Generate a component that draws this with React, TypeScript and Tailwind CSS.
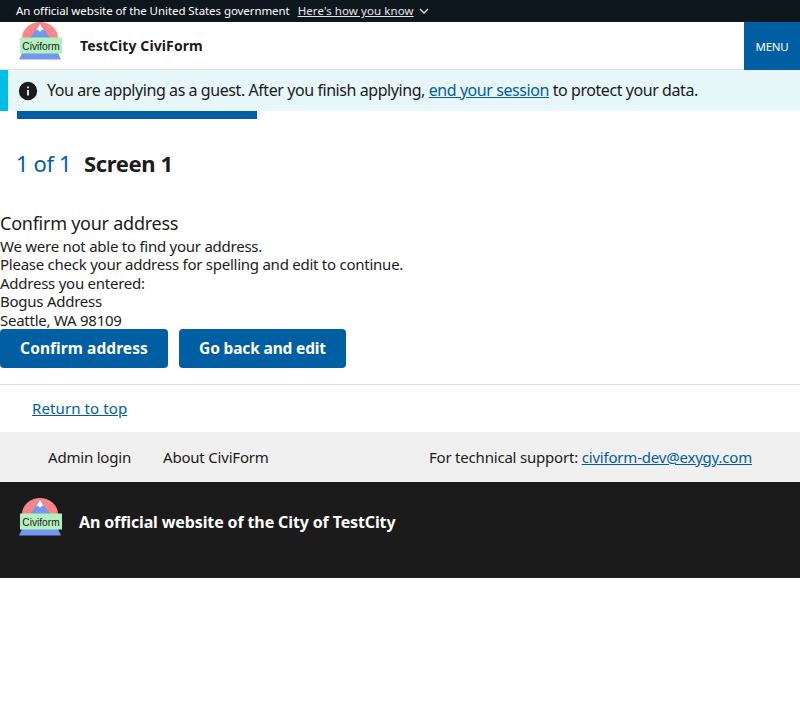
import React from 'react';

const Logo: React.FC = () => (
  <svg width="44" height="38" viewBox="0 0 44 38" className="shrink-0">
    <path d="M3 16a18 16 0 0 1 36 0z" fill="#fb8484" />
    <circle cx="9" cy="10" r="0.6" fill="#ffd9d9" />
    <circle cx="14" cy="6" r="0.6" fill="#ffd9d9" />
    <circle cx="30" cy="5" r="0.6" fill="#ffd9d9" />
    <circle cx="34" cy="11" r="0.6" fill="#ffd9d9" />
    <path d="M21 1.5L31 16H11z" fill="#7497ee" />
    <path d="M21 2l4 6.5-2-1-2 2.5-2-2.5-2 1z" fill="#ffffff" />
    <path d="M3 31h36l3 6.5H0z" fill="#7497ee" />
    <rect x="1" y="15.5" width="42" height="16" fill="#b3f0bd" />
    <text x="22" y="27.5" textAnchor="middle" fontSize="10.2" fill="#1b1b1b" fontFamily="'Liberation Sans', sans-serif">
      Civiform
    </text>
  </svg>
);

export default function App() {
  return (
    <div className="min-h-[720px] bg-white font-['Noto_Sans',sans-serif] text-[#1b1b1b]">
      <div className="flex h-[22px] items-center bg-[#0f171e] pl-4 text-[11.5px] text-white">
        <span className="tracking-[-0.07px]">An official website of the United States government</span>
        <a href="#" className="ml-2 tracking-[0.08px] text-[#e6e6e6] underline">Here's how you know</a>
        <svg width="12" height="12" viewBox="0 0 12 12" fill="none" stroke="#d9d9d9" strokeWidth="1.4" className="ml-1">
          <path d="M2 4l4 4 4-4" />
        </svg>
      </div>

      <header className="flex h-[48px] items-stretch justify-between">
        <div className="flex grow items-start border-b border-[#dfe1e2] pl-[19px]">
          <Logo />
          <span className="ml-[17px] mt-[13px] text-[14px] font-bold tracking-[0.1px]">TestCity CiviForm</span>
        </div>
        <button className="w-14 bg-[#005ea2] pt-[2px] text-[11.5px] tracking-[-0.2px] text-white">MENU</button>
      </header>

      <div className="flex h-[41px] items-center border-l-8 border-[#00bde3] bg-[#e7f6f8] pl-[9px] text-[16px] tracking-[-0.43px]">
        <svg width="22" height="22" viewBox="0 0 24 24" className="shrink-0" fill="#1b1b1b">
          <path d="M12 2a10 10 0 1 0 0 20 10 10 0 0 0 0-20zm1 15h-2v-6h2v6zm0-8h-2V7h2v2z" />
        </svg>
        <p className="ml-2 pb-[2px]">
          You are applying as a guest. After you finish applying,{' '}
          <a href="#" className="text-[#005ea2] underline">end your session</a> to protect your data.
        </p>
      </div>

      <div className="ml-[17px] h-2 w-[240px] bg-[#005ea2]" />

      <div className="flex items-center pl-4 pt-[28px] text-[22px] tracking-[-0.4px]">
        <span className="text-[#005ea2]">1 of 1</span>
        <span className="ml-[13px] font-bold">Screen 1</span>
      </div>

      <h2 className="mb-px mt-[30px] text-[18px] leading-[26px] tracking-[-0.25px]">Confirm your address</h2>
      <div className="text-[15px] leading-[18.4px] tracking-[-0.25px]">
        <p>We were not able to find your address.</p>
        <p>Please check your address for spelling and edit to continue.</p>
        <p>Address you entered:</p>
        <p>Bogus Address</p>
        <p>Seattle, WA 98109</p>
      </div>

      <div className="flex gap-[11px]">
        <button className="h-[39px] w-[168px] rounded bg-[#005ea2] text-[15.5px] font-bold tracking-[0.07px] text-white">Confirm address</button>
        <button className="h-[39px] w-[167px] rounded bg-[#005ea2] text-[15.5px] font-bold tracking-[-0.15px] text-white">Go back and edit</button>
      </div>

      <div className="mt-4 border-t border-[#dfe1e2] py-[14px] pl-8 text-[15px] leading-[19px] tracking-[0.1px]">
        <a href="#" className="text-[#005ea2] underline">Return to top</a>
      </div>

      <div className="flex h-[50px] items-center justify-between bg-[#f0f0f0] px-12 text-[15px] tracking-[-0.2px]">
        <div className="flex gap-8">
          <span>Admin login</span>
          <span>About CiviForm</span>
        </div>
        <span>
          For technical support: <a href="#" className="text-[#005ea2] underline">civiform-dev@exygy.com</a>
        </span>
      </div>

      <footer className="flex h-24 items-start bg-[#1b1b1b] pl-[19px] pt-4">
        <Logo />
        <span className="ml-4 mt-[12px] text-[16px] font-bold tracking-[-0.13px] text-white">An official website of the City of TestCity</span>
      </footer>
    </div>
  );
}
